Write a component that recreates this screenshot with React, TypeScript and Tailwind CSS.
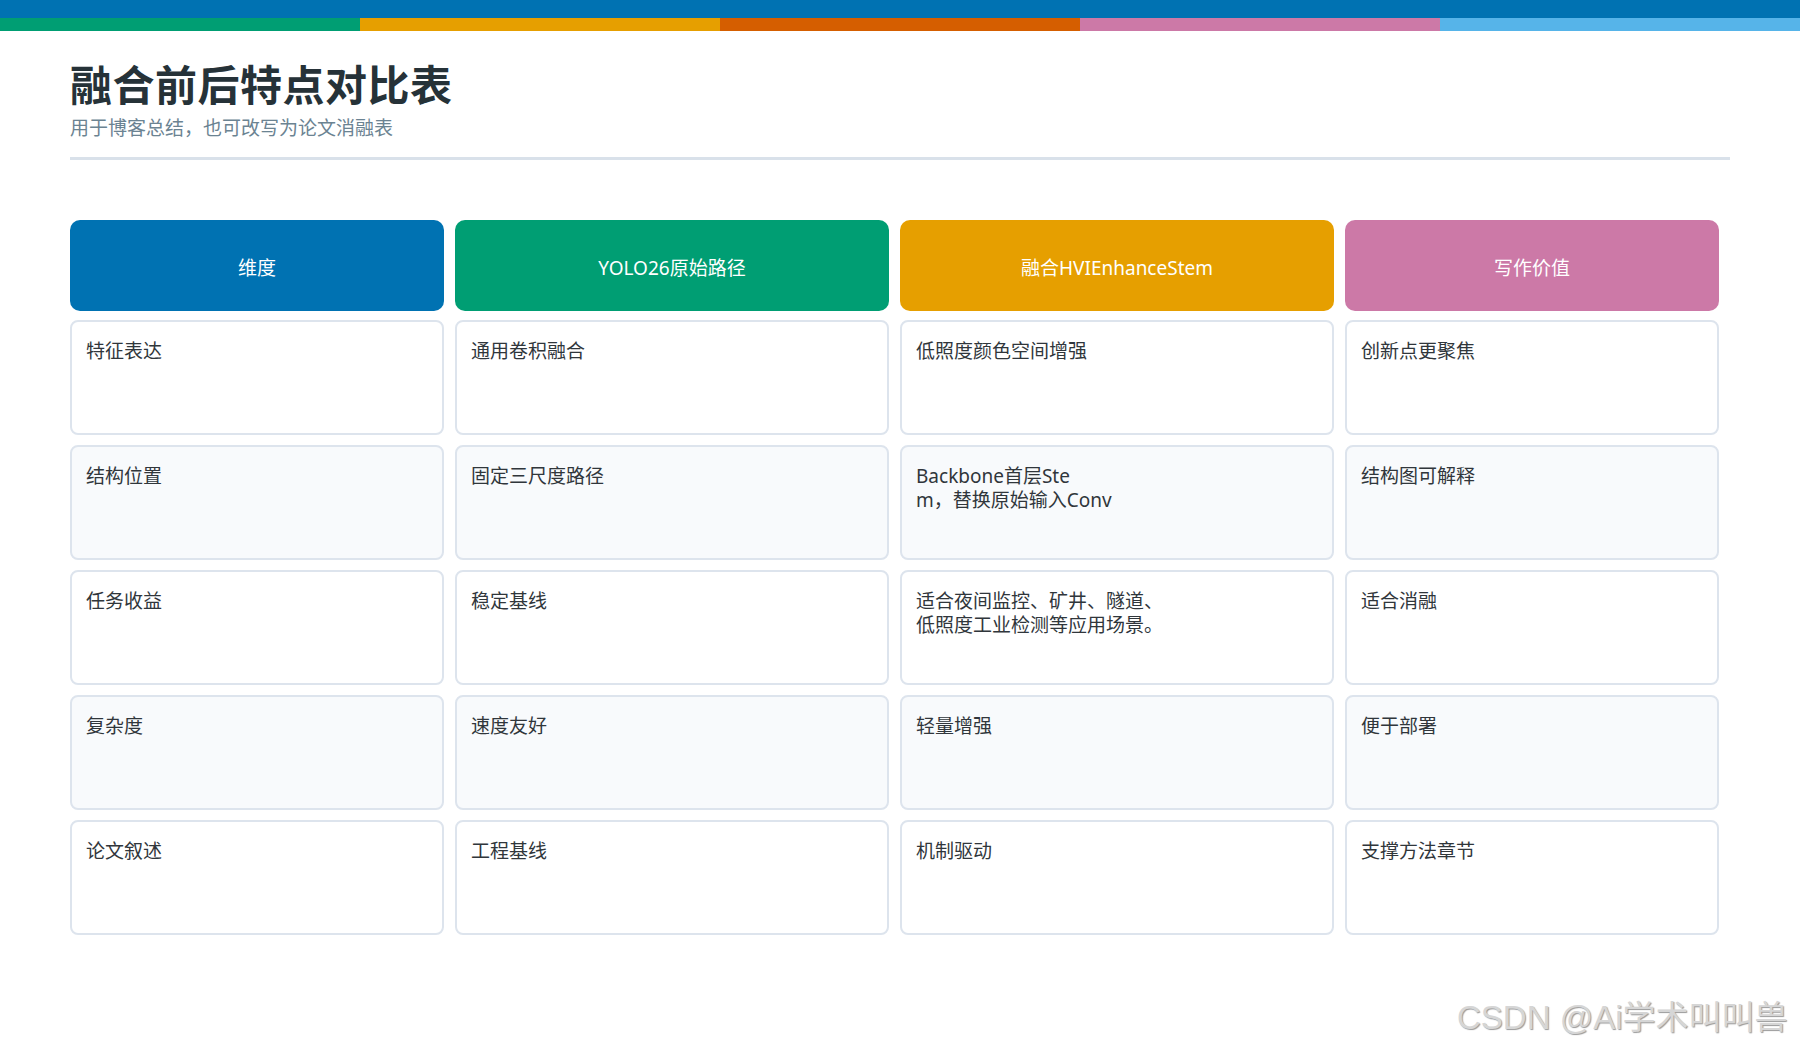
import React from "react";

const barColors = ["bg-[#009e73]", "bg-[#e69f00]", "bg-[#d55e00]", "bg-[#cc79a7]", "bg-[#56b4e9]"];

const headers = [
  { label: "维度", color: "bg-[#0072b2]" },
  { label: "YOLO26原始路径", color: "bg-[#009e73]" },
  { label: "融合HVIEnhanceStem", color: "bg-[#e69f00]" },
  { label: "写作价值", color: "bg-[#cc79a7]" },
];

// line breaks are kept as in the picture
const rows: string[][] = [
  ["特征表达", "通用卷积融合", "低照度颜色空间增强", "创新点更聚焦"],
  ["结构位置", "固定三尺度路径", "Backbone首层Ste\nm，替换原始输入Conv", "结构图可解释"],
  ["任务收益", "稳定基线", "适合夜间监控、矿井、隧道、\n低照度工业检测等应用场景。", "适合消融"],
  ["复杂度", "速度友好", "轻量增强", "便于部署"],
  ["论文叙述", "工程基线", "机制驱动", "支撑方法章节"],
];

const font = "font-['Noto_Sans','Noto_Sans_CJK_SC',sans-serif]";

export default function App() {
  return (
    <div className={`relative w-[1800px] h-[1050px] bg-white overflow-hidden ${font}`}>
      {/* top colour strips */}
      <div className="h-[18px] bg-[#0072b2]" />
      <div className="grid grid-cols-5 h-[13px]">
        {barColors.map((c) => (
          <div key={c} className={c} />
        ))}
      </div>

      <div className="px-[70px]">
        <h1 className="mt-[33px] text-[42px] leading-[42px] font-bold text-[#263238] tracking-[0.5px]">
          融合前后特点对比表
        </h1>
        <p className="mt-[11px] text-[19px] leading-[22px] text-[#6b8392]">
          用于博客总结，也可改写为论文消融表
        </p>
        <div className="mt-[18px] h-[3px] bg-[#d9e1ea]" />

        <div className="mt-[60px] grid grid-cols-[374px_434px_434px_374px] gap-x-[11px]">
          {headers.map((h) => (
            <div
              key={h.label}
              className={`${h.color} h-[91px] rounded-[10px] flex items-center justify-center pt-[6px] text-white text-[19px]`}
            >
              {h.label}
            </div>
          ))}
        </div>

        <div className="mt-[9px] grid grid-cols-[374px_434px_434px_374px] gap-x-[11px] gap-y-[10px]">
          {rows.map((row, i) =>
            row.map((cell, j) => (
              <div
                key={`${i}-${j}`}
                className={`h-[115px] rounded-[8px] border-2 border-[#dde4ed] px-[14px] pt-[17px] whitespace-pre-line text-[19px] leading-[24px] text-[#30363b] ${
                  i % 2 === 1 ? "bg-[#f8fafc]" : "bg-white"
                }`}
              >
                {cell}
              </div>
            ))
          )}
        </div>
      </div>

      {/* watermark */}
      <div className="absolute left-[1457px] top-[998px] text-[33px] leading-[40px] text-[#d6d6d6] font-['Liberation_Sans','Noto_Sans_CJK_SC',sans-serif] [text-shadow:1px_1px_1px_#9a9a9a]">
        CSDN @Ai学术叫叫兽
      </div>
    </div>
  );
}
